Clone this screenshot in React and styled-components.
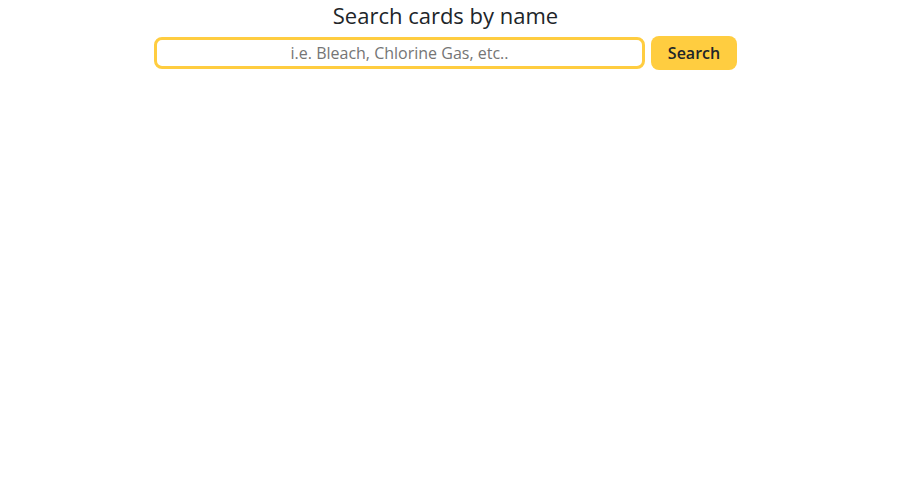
import styled, { createGlobalStyle } from "styled-components";

const GlobalStyle = createGlobalStyle`
    body {
        margin: 0;
        background: #ffffff;
        font-family: "Open Sans", sans-serif;
    }
`;

const Page = styled.div`
    width: 891px;
    display: flex;
    flex-direction: column;
    align-items: center;
`;

const Title = styled.h1`
    margin: 0 0 6px;
    font-size: 22px;
    font-weight: 400;
    color: #212529;
`;

const SearchRow = styled.form`
    display: flex;
    align-items: center;
    gap: 6px;
`;

const Input = styled.input`
    box-sizing: border-box;
    width: 491px;
    height: 32px;
    border: 3px solid #ffcd40;
    border-radius: 8px;
    font-family: "Open Sans", sans-serif;
    font-size: 16px;
    text-align: center;
    outline: none;
    &::placeholder {
        color: #757575;
    }
`;

const Button = styled.button`
    box-sizing: border-box;
    width: 86px;
    height: 34px;
    border: none;
    border-radius: 8px;
    background: #ffcd40;
    color: #212529;
    font-family: "Open Sans", sans-serif;
    font-size: 16px;
    font-weight: 600;
    cursor: pointer;
`;

const App = () => {
    return (
        <Page>
            <GlobalStyle />
            <Title>Search cards by name</Title>
            <SearchRow onSubmit={(e) => e.preventDefault()}>
                <Input placeholder="i.e. Bleach, Chlorine Gas, etc.." />
                <Button type="submit">Search</Button>
            </SearchRow>
        </Page>
    )
}

export default App
